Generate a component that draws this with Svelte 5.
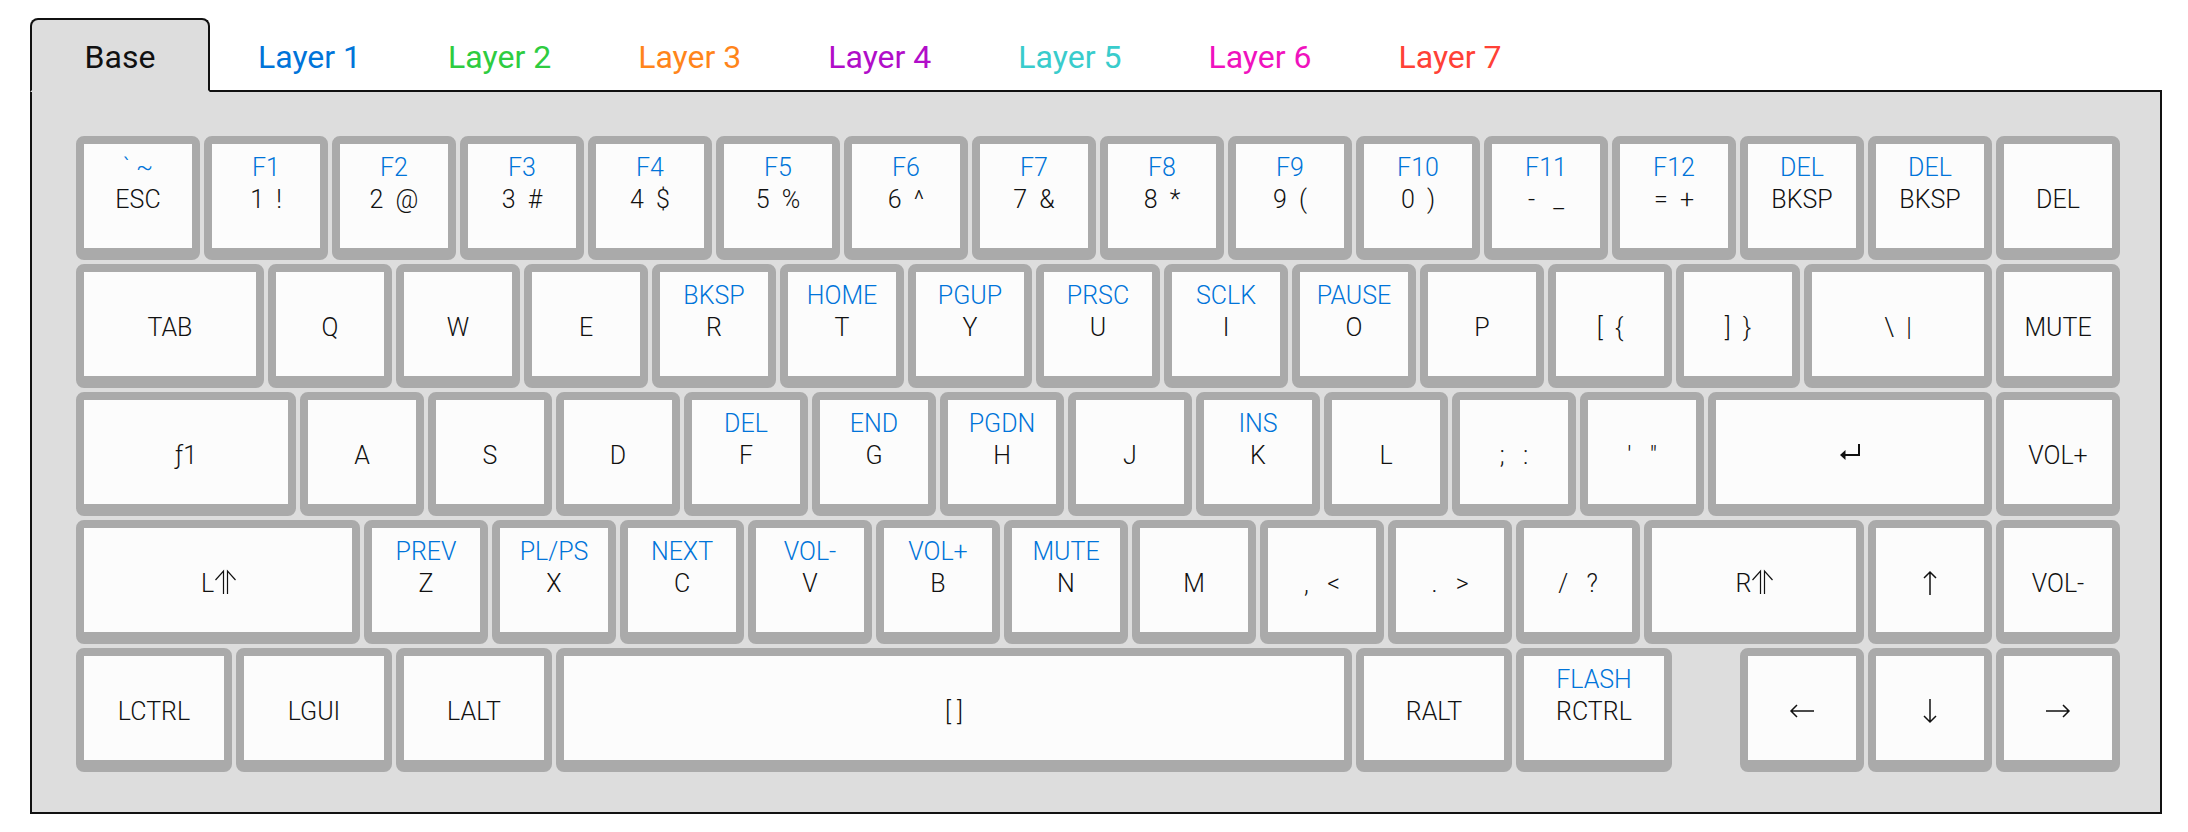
<script>
  const tabs = [
    { name: 'Base', color: '#111111' },
    { name: 'Layer 1', color: '#0074d9' },
    { name: 'Layer 2', color: '#2ecc40' },
    { name: 'Layer 3', color: '#ff851b' },
    { name: 'Layer 4', color: '#b10dc9' },
    { name: 'Layer 5', color: '#39cccc' },
    { name: 'Layer 6', color: '#f012be' },
    { name: 'Layer 7', color: '#ff4136' }
  ];
  let active = $state(0);

  // Each key: [base legend, layer 1 legend, width in key units]
  const keys = [
    ['ESC', '` ~'], ['1  !', 'F1'], ['2  @', 'F2'], ['3  #', 'F3'], ['4  $', 'F4'],
    ['5  %', 'F5'], ['6  ^', 'F6'], ['7  &', 'F7'], ['8  *', 'F8'], ['9  (', 'F9'],
    ['0  )', 'F10'], ['-   _', 'F11'], ['=  +', 'F12'], ['BKSP', 'DEL'], ['BKSP', 'DEL'], ['DEL'],

    ['TAB', '', 1.5], ['Q'], ['W'], ['E'], ['R', 'BKSP'], ['T', 'HOME'], ['Y', 'PGUP'],
    ['U', 'PRSC'], ['I', 'SCLK'], ['O', 'PAUSE'], ['P'], ['[  {'], [']  }'], ['\\  |', '', 1.5], ['MUTE'],

    ['ƒ1', '', 1.75], ['A'], ['S'], ['D'], ['F', 'DEL'], ['G', 'END'], ['H', 'PGDN'], ['J'],
    ['K', 'INS'], ['L'], [';   :'], ['\'   "'], ['@enter', '', 2.25], ['VOL+'],

    ['L@shift', '', 2.25], ['Z', 'PREV'], ['X', 'PL/PS'], ['C', 'NEXT'], ['V', 'VOL-'],
    ['B', 'VOL+'], ['N', 'MUTE'], ['M'], [',   <'], ['.   >'], ['/   ?'], ['R@shift', '', 1.75],
    ['@up'], ['VOL-'],

    ['LCTRL', '', 1.25], ['LGUI', '', 1.25], ['LALT', '', 1.25], ['[ ]', '', 6.25],
    ['RALT', '', 1.25], ['RCTRL', 'FLASH', 1.25], [null, '', 0.5], ['@left'], ['@down'], ['@right']
  ].map(([base, upper = '', units = 1]) => {
    const [text, icon] = base === null ? ['', ''] : base.includes('@') && !base.includes('  ') ? base.split('@') : [base, ''];
    return { empty: base === null, text, icon, upper, span: units * 4 };
  });

  const icons = {
    shift: { w: 21, d: 'M9.5 22V-1L1.5 8M13.5 22V-1l8 9', stroke: 1.2 },
    up: { w: 24, d: 'M12 23V0M6 6l6-6 6 6', stroke: 1.5 },
    down: { w: 24, d: 'M12 -1v23M6 16l6 6 6-6', stroke: 1.5 },
    left: { w: 24, d: 'M24 11H1M7 5l-6 6 6 6', stroke: 1.5 },
    right: { w: 24, d: 'M0 11h23M17 5l6 6-6 6', stroke: 1.5 },
    enter: { w: 24, d: 'M21 0v11H6', stroke: 2, head: 'M2 11l5.5-5v10z' }
  };
</script>

<main>
  <div class="tabs" role="tablist">
    {#each tabs as tab, i}
      <button
        role="tab"
        class="tab"
        class:active={active === i}
        aria-selected={active === i}
        style="color: {tab.color}"
        onclick={() => (active = i)}>{tab.name}</button>
    {/each}
  </div>

  <div class="board" role="tabpanel">
    {#each keys as key}
      {#if key.empty}
        <div style="grid-column: span {key.span}"></div>
      {:else}
        <div class="key" style="grid-column: span {key.span}">
          <div class="upper">{key.upper}</div>
          <div class="base">
            {#if key.text}<span class="legend">{key.text}</span>{/if}
            {#if key.icon}
              {@const icon = icons[key.icon]}
              <svg width={icon.w} height="24" viewBox="0 0 {icon.w} 24" aria-hidden="true">
                <path d={icon.d} fill="none" stroke="currentColor" stroke-width={icon.stroke} />
                {#if icon.head}<path d={icon.head} fill="currentColor" />{/if}
              </svg>
            {/if}
          </div>
        </div>
      {/if}
    {/each}
  </div>
</main>

<style>
  :global(body) {
    margin: 0;
    background: #fff;
  }

  main {
    padding: 18px 26px 18px 30px;
    font-family: Roboto, 'Open Sans', sans-serif;
    color: #111;
  }

  .tabs {
    display: flex;
    gap: 3px;
  }

  .tab {
    box-sizing: border-box;
    height: 74px;
    min-width: 180px;
    margin: 0 0 -2px;
    padding: 3px 40px 0;
    border: 2px solid transparent;
    border-radius: 8px 8px 0 0;
    background: none;
    font: 400 32px/40px Roboto, 'Open Sans', sans-serif;
    white-space: nowrap;
    cursor: pointer;
  }

  .tab:first-child {
    margin-right: 3px;
  }

  .tab.active {
    position: relative;
    border-color: #111 #111 #ddd;
    background: #ddd;
  }

  .board {
    display: grid;
    grid-template-columns: repeat(64, minmax(0, 1fr));
    padding: 42px 38px 38px 42px;
    border: 2px solid #111;
    background: #ddd;
  }

  .key {
    height: 96px;
    margin: 2px;
    padding-top: 8px;
    border: 8px solid #aaa;
    border-bottom-width: 12px;
    border-radius: 8px;
    background: #fcfcfc;
    font-size: 25px;
    font-weight: 300;
    line-height: 32px;
  }

  .upper {
    height: 32px;
    text-align: center;
    white-space: pre;
    color: #0074d9;
  }

  .base {
    display: flex;
    align-items: center;
    justify-content: center;
    height: 32px;
  }

  .legend {
    white-space: pre;
  }

  svg {
    display: block;
    overflow: visible;
  }
</style>
